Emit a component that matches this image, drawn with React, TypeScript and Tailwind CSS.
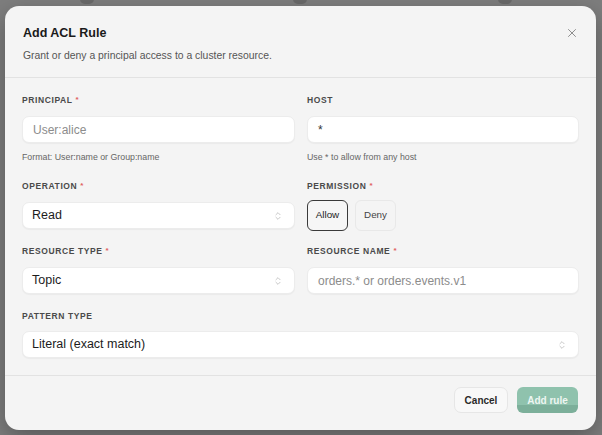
import { ChevronsUpDown, X } from "lucide-react";

const font = { fontFamily: '"Liberation Sans", Arial, sans-serif' };

const Label = ({ text, required }: { text: string; required?: boolean }) => (
  <div className="flex h-[12px] items-center gap-[3px] text-[8.5px] font-bold tracking-[0.6px] text-[#4a4a4a]">
    <span>{text}</span>
    {required && <span className="text-[8px] text-[#e06060]">*</span>}
  </div>
);

const TextInput = ({
  placeholder,
  value,
}: {
  placeholder?: string;
  value?: string;
}) => (
  <div className="flex h-[27px] items-center rounded-[7px] border border-[#ececec] bg-white pl-[10px] text-[12px] shadow-[0_1px_1px_rgba(0,0,0,0.04)]">
    {value ? (
      <span className="text-[#333]">{value}</span>
    ) : (
      <span className="text-[#8c8c8c]">{placeholder}</span>
    )}
  </div>
);

const Select = ({ value }: { value: string }) => (
  <div className="flex h-[27px] items-center justify-between rounded-[7px] border border-[#ececec] bg-white pl-[9px] pr-[11px] text-[12.5px] text-[#1c1c1c] shadow-[0_1px_1px_rgba(0,0,0,0.04)]">
    <span>{value}</span>
    <ChevronsUpDown size={10} strokeWidth={1.5} className="text-[#a8a8a8]" />
  </div>
);

const Hint = ({ text }: { text: string }) => (
  <div className="mt-[8px] h-[12px] text-[8.8px] leading-[12px] text-[#666]">
    {text}
  </div>
);

export default function App() {
  return (
    <div
      className="relative h-[435px] w-full overflow-hidden bg-[#7e7e7e]"
      style={font}
    >
      {/* bits of the page peeking above the dialog */}
      <div className="absolute left-[80px] top-[-6px] h-[10px] w-[14px] rounded-full bg-[#6a6a6a]" />
      <div className="absolute left-[293px] top-[-6px] h-[10px] w-[14px] rounded-full bg-[#6a6a6a]" />
      <div className="absolute left-[498px] top-[-6px] h-[10px] w-[14px] rounded-full bg-[#6a6a6a]" />

      <div className="relative ml-[5px] mt-[6px] flex h-[424px] w-[591px] flex-col rounded-[14px] bg-[#f4f4f4] shadow-[0_8px_24px_rgba(0,0,0,0.3)]">
        {/* header */}
        <div className="relative border-b border-[#e2e2e2] px-[18px] pb-[14px] pt-[19px]">
          <div className="h-[16px] text-[12.5px] font-bold leading-[16px] text-[#1a1a1a]">
            Add ACL Rule
          </div>
          <div className="mt-[8px] h-[14px] text-[10.4px] leading-[14px] text-[#555]">
            Grant or deny a principal access to a cluster resource.
          </div>
          <button className="absolute right-[17px] top-[20px] text-[#777]">
            <X size={14} strokeWidth={1.4} />
          </button>
        </div>

        {/* body */}
        <div className="flex flex-col px-[17px] pb-[17px] pt-[16px]">
          <div className="grid grid-cols-[273px_272px] gap-x-[12px]">
            <div>
              <Label text="PRINCIPAL" required />
              <div className="mt-[10px]">
                <TextInput placeholder="User:alice" />
              </div>
              <Hint text="Format: User:name or Group:name" />
            </div>
            <div>
              <Label text="HOST" />
              <div className="mt-[10px]">
                <TextInput value="*" />
              </div>
              <Hint text="Use * to allow from any host" />
            </div>
          </div>

          <div className="mt-[17px] grid grid-cols-[273px_272px] gap-x-[12px]">
            <div>
              <Label text="OPERATION" required />
              <div className="mt-[10px]">
                <Select value="Read" />
              </div>
            </div>
            <div>
              <Label text="PERMISSION" required />
              <div className="mt-[8px] flex gap-[7px]">
                <button className="flex h-[31px] w-[41px] items-center justify-center rounded-[6px] border border-[#3a3a3a] bg-[#f6f6f6] text-[9.8px] text-[#222]">
                  Allow
                </button>
                <button className="flex h-[31px] w-[41px] items-center justify-center rounded-[6px] border border-[#e8e8e8] bg-[#f4f4f4] text-[9.8px] text-[#444]">
                  Deny
                </button>
              </div>
            </div>
          </div>

          <div className="mt-[14px] grid grid-cols-[273px_272px] gap-x-[12px]">
            <div>
              <Label text="RESOURCE TYPE" required />
              <div className="mt-[10px]">
                <Select value="Topic" />
              </div>
            </div>
            <div>
              <Label text="RESOURCE NAME" required />
              <div className="mt-[10px]">
                <TextInput placeholder="orders.* or orders.events.v1" />
              </div>
            </div>
          </div>

          <div className="mt-[16px]">
            <Label text="PATTERN TYPE" />
            <div className="mt-[9px]">
              <Select value="Literal (exact match)" />
            </div>
          </div>
        </div>

        {/* footer */}
        <div className="flex flex-1 items-start justify-end gap-[9px] border-t border-[#e2e2e2] pr-[18px] pt-[11px]">
          <button className="flex h-[26px] w-[54px] items-center justify-center rounded-[7px] border border-[#e6e6e6] bg-[#f8f8f8] text-[10px] font-bold text-[#2a2a2a]">
            Cancel
          </button>
          <button className="flex h-[26px] w-[61px] items-center justify-center rounded-[6px] bg-[linear-gradient(#8fc2ad_0%,#8fc2ad_68%,#7caf9a_68%,#7caf9a_100%)] text-[10px] font-bold text-[#eef6f2]">
            Add rule
          </button>
        </div>
      </div>
    </div>
  );
}
